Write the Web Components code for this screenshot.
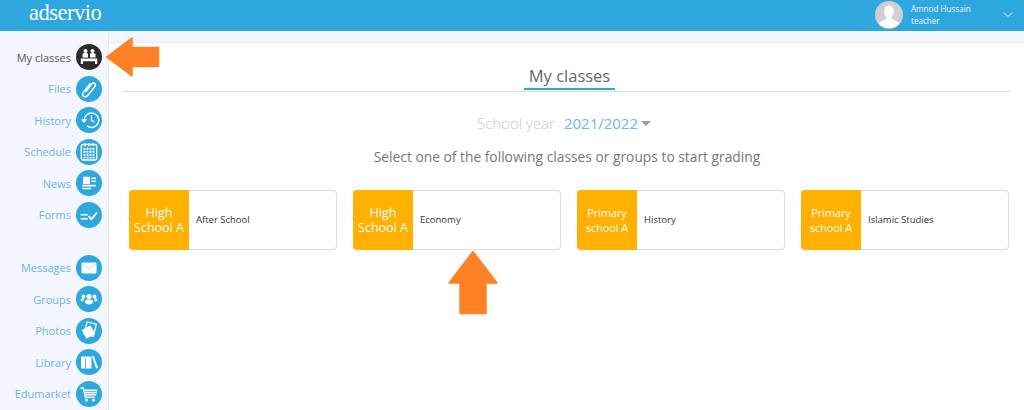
<!DOCTYPE html>
<html lang="en">
<head>
<meta charset="utf-8">
<title>adservio</title>
<style>
    html, body { margin: 0; height: 410px; overflow: hidden; background: #f3f6fe; font-family: "Open Sans", sans-serif; }
    app-shell { display: block; }
</style>
</head>
<body>
<app-shell>
    <app-header slot="header" name="Amnod Hussain" role="teacher"></app-header>
    <side-nav slot="nav">
        <nav-item label="My classes" icon="classes" active></nav-item>
        <nav-item label="Files" icon="files"></nav-item>
        <nav-item label="History" icon="history"></nav-item>
        <nav-item label="Schedule" icon="schedule"></nav-item>
        <nav-item label="News" icon="news"></nav-item>
        <nav-item label="Forms" icon="forms"></nav-item>
        <nav-item slot="second" label="Messages" icon="messages"></nav-item>
        <nav-item slot="second" label="Groups" icon="groups"></nav-item>
        <nav-item slot="second" label="Photos" icon="photos"></nav-item>
        <nav-item slot="second" label="Library" icon="library"></nav-item>
        <nav-item slot="second" label="Edumarket" icon="edumarket"></nav-item>
    </side-nav>
    <class-page slot="main">
        <class-card level="High School A" big>After School</class-card>
        <class-card level="High School A" big>Economy</class-card>
        <class-card level="Primary school A">History</class-card>
        <class-card level="Primary school A">Islamic Studies</class-card>
    </class-page>
    <big-arrow slot="over" dir="left" style="left:105px;top:37px"></big-arrow>
    <big-arrow slot="over" dir="up" style="left:448px;top:250px"></big-arrow>
</app-shell>

<script>
const ICONS = {
    classes: `<circle cx="9.500" cy="7" r="2" fill="#fff"/><circle cx="16.500" cy="7" r="2" fill="#fff"/><path fill="#fff" d="M6.500 13.500v-3c0-1 1.300-1.500 3-1.500 1 0 1.900.2 2.500.6v3.900zM14 13.500V9.600c.6-.4 1.500-.6 2.500-.6 1.700 0 3 .5 3 1.500v3z"/><path fill="#fff" d="M4.800 14.500h16.400v5.500h-2.200v-2.700H7V20H4.800z"/>`,
    files: `<path fill="none" stroke="#fff" stroke-width="1.500" stroke-linecap="round" d="M10 15.500l5.500-7.500c.9-1.200 2.500-1.200 3.300-.5s.9 2-.1 3.200l-7 8.800c-1.300 1.500-3.200 1.500-4.200.7s-1.100-2.500 0-4.100l6.500-8.300"/>`,
    history: `<path fill="none" stroke="#fff" stroke-width="1.500" d="M8.400 13.500a7.200 7.200 0 1 1 2.800 5.400"/><path fill="none" stroke="#fff" stroke-width="1.300" d="M15.500 8.500v4.800l3 1.800"/><path fill="#fff" d="M5 12.300h6.200l-3.100 3.700z"/>`,
    schedule: `<rect x="5.300" y="5.500" width="15.400" height="15.500" rx="2" fill="none" stroke="#fff" stroke-width="1.300"/><path stroke="#fff" stroke-width="1.400" d="M9 4v3M13 4v3M17 4v3"/><path stroke="#fff" stroke-width="1.900" stroke-dasharray="2 1" d="M7.500 9.800h11M7.500 12.800h11M7.500 15.800h11M7.500 18.600h11"/>`,
    news: `<path fill="#fff" d="M7 6.800h7V14H7zM15.300 7.500H20V9h-4.700zM15.300 10.500H20V12h-4.700zM6.300 14.800H20v1.700H6.300zM6.300 17.700H15v1.500H6.300z"/>`,
    forms: `<path fill="#fff" d="M4.700 12h7v1.600h-7zM4.700 16h7v1.600h-7z"/><path fill="none" stroke="#fff" stroke-width="1.900" d="M12.500 14l3 3.200 5.500-6.700"/>`,
    messages: `<rect x="5.500" y="7.500" width="15" height="11" rx="1" fill="#fff"/><path fill="none" stroke="#b7dff3" stroke-width=".9" d="M5.800 8.500l7.200 5.300 7.200-5.300"/>`,
    groups: `<circle cx="13" cy="10.500" r="2.600" fill="#fff"/><circle cx="7.500" cy="10.500" r="1.900" fill="#fff"/><circle cx="18.500" cy="10.500" r="1.900" fill="#fff"/><path fill="#fff" d="M8.800 15.500c0-1.500 1.800-2.100 4.200-2.100s4.200.6 4.200 2.100c0 1.900-2 3-4.200 3s-4.200-1.100-4.200-3zM4.500 13.800c0-.8 1.300-1.300 3-1.300l.8.200c-.7.600-1 1.200-1 2.300l-.1.700c-1.500-.3-2.700-1-2.700-1.900zM21.500 13.800c0-.8-1.300-1.300-3-1.300l-.8.200c.7.600 1 1.200 1 2.300l.1.700c1.500-.3 2.700-1 2.700-1.900z"/>`,
    photos: `<rect x="9.500" y="4.800" width="9.500" height="12.500" transform="rotate(14 14 11)" fill="none" stroke="#fff" stroke-width="1.200"/><rect x="7.500" y="9" width="10" height="10" transform="rotate(-28 12.500 14)" fill="#fff"/>`,
    library: `<path fill="#fff" d="M5 7.500h10.500v12H5z"/><path fill="none" stroke="#2ea6de" stroke-width=".8" d="M9.500 9.500v10"/><path fill="#fff" d="M16 7.500l1.800-.6 4.300 12-2 .6z"/>`,
    edumarket: `<path fill="none" stroke="#fff" stroke-width="1.400" d="M4.500 7h2.800l2 9.200h9.500"/><path fill="#fff" d="M8.200 8.500h13.300l-1.500 6H9.500z"/><path fill="none" stroke="#2ea6de" stroke-width=".7" d="M8.800 10.500h12M9.200 12.500h11"/><circle cx="10.500" cy="19" r="1.500" fill="#fff"/><circle cx="17.500" cy="19" r="1.500" fill="#fff"/>`
};

class AppShell extends HTMLElement {
    constructor() {
        super();
        this.attachShadow({ mode: 'open' });
        this.shadowRoot.innerHTML = `
            <style>
                :host { display: block; position: relative; width: 1024px; height: 410px; overflow: hidden; }
                .body { display: flex; height: 379px; }
            </style>
            <slot name="header"></slot>
            <div class="body">
                <slot name="nav"></slot>
                <slot name="main"></slot>
            </div>
            <slot name="over"></slot>
        `;
    }
}

class AppHeader extends HTMLElement {
    constructor() {
        super();
        this.attachShadow({ mode: 'open' });
    }

    connectedCallback() {
        this.shadowRoot.innerHTML = `
            <style>
                :host { display: flex; align-items: center; height: 31px; background: #2ea6de; color: #fff; padding: 0 10px 0 29px; }
                .logo { font-family: "Liberation Serif", serif; font-size: 22.500px; letter-spacing: -0.5px; line-height: 28px; margin-top: -5px; }
                .user { margin-left: auto; margin-top: -2px; display: flex; align-items: center; }
                .avatar { width: 28px; height: 28px; margin-right: 8px; display: block; }
                .who { font-size: 8.100px; line-height: 12px; width: 91px; color: #eef8fd; }
                .chev { display: block; width: 12px; height: 8px; }
            </style>
            <div class="logo">adservio</div>
            <div class="user">
                <svg class="avatar" viewBox="0 0 28 28">
                    <circle cx="14" cy="14" r="14" fill="#cfcfcf"/>
                    <ellipse cx="14" cy="10.500" rx="5" ry="6.200" fill="#fff"/>
                    <path fill="#fff" d="M11.500 15.500h5v2.300l6.500 3.200c.8.400 1 1.100 1 1.700a14 14 0 0 1-20 0c0-.6.200-1.300 1-1.700l6.500-3.200z"/>
                </svg>
                <div class="who">
                    <div>${this.getAttribute('name')}</div>
                    <div>${this.getAttribute('role')}</div>
                </div>
                <svg class="chev" viewBox="0 0 12 8"><path d="M1.500 1.500l4.500 4 4.500-4" fill="none" stroke="#cfe9f7" stroke-width="1"/></svg>
            </div>
        `;
    }
}

class SideNav extends HTMLElement {
    constructor() {
        super();
        this.attachShadow({ mode: 'open' });
        this.shadowRoot.innerHTML = `
            <style>
                :host { display: block; flex: none; width: 108px; padding-top: 10.500px; border-right: 1px solid #e6e9f0; }
                .group { display: flex; flex-direction: column; }
                .second { margin-top: 21.500px; }
            </style>
            <div class="group"><slot></slot></div>
            <div class="group second"><slot name="second"></slot></div>
        `;
    }
}

class NavItem extends HTMLElement {
    constructor() {
        super();
        this.attachShadow({ mode: 'open' });
    }

    connectedCallback() {
        const active = this.hasAttribute('active');
        this.shadowRoot.innerHTML = `
            <style>
                :host { display: flex; align-items: center; justify-content: flex-end; height: 31.500px; padding-right: 6px; gap: 5px; font-size: 11px; color: ${active ? '#555' : '#6db5e3'}; }
                svg { display: block; width: 26px; height: 26px; flex: none; }
            </style>
            <span>${this.getAttribute('label')}</span>
            <svg viewBox="0 0 26 26">
                <circle cx="13" cy="13" r="13" fill="${active ? '#2b2b2b' : '#2ea6de'}"/>
                ${ICONS[this.getAttribute('icon')]}
            </svg>
        `;
    }
}

class ClassPage extends HTMLElement {
    constructor() {
        super();
        this.attachShadow({ mode: 'open' });
        this.shadowRoot.innerHTML = `
            <style>
                :host { display: block; flex: 1; background: #fff; margin-top: 11px; border-top: 1px solid #e9ebf0; padding: 0 13px 0 14px; color: #666; }
                .title { display: flex; justify-content: center; border-bottom: 1px solid #d9dde0; height: 49px; box-sizing: border-box; padding-top: 21px; }
                .title span { font-size: 16.500px; line-height: 23px; height: 26px; box-sizing: border-box; padding: 0 5px; border-bottom: 2px solid #2ea6de; margin-bottom: -1px; color: #666; margin-left: 5px; }
                .year { display: flex; justify-content: center; align-items: center; margin-top: 20px; font-size: 15px; line-height: 22px; padding-right: 6px; }
                .year span { font-weight: 300; color: #c8c8c8; }
                .year b { font-weight: 400; color: #6db5e3; margin-left: 9px; }
                .caret { width: 0; height: 0; border: 5.500px solid transparent; border-top: 5.500px solid #999; border-bottom: 0; margin-left: 3px; }
                .hint { text-align: center; font-size: 13.800px; line-height: 20px; margin-top: 13px; color: #777; }
                .grid { display: grid; grid-template-columns: repeat(4, 208px); gap: 16px; margin: 23px 0 0 6px; }
            </style>
            <div class="title"><span>My classes</span></div>
            <div class="year"><span>School year</span> <b>2021/2022</b><i class="caret"></i></div>
            <div class="hint">Select one of the following classes or groups to start grading</div>
            <div class="grid"><slot></slot></div>
        `;
    }
}

class ClassCard extends HTMLElement {
    constructor() {
        super();
        this.attachShadow({ mode: 'open' });
    }

    connectedCallback() {
        this.shadowRoot.innerHTML = `
            <style>
                :host { display: flex; height: 60px; box-sizing: border-box; background: #fff; border: 1px solid #dedede; border-radius: 4px; font-size: 9.500px; color: #333; align-items: stretch; }
                .level { flex: none; width: 60px; margin: -1px 0 -1px -1px; background: #ffb000; border-radius: 4px 0 0 4px; color: #fff; display: flex; align-items: center; justify-content: center; text-align: center; font-size: ${this.hasAttribute('big') ? '12.500px' : '10.800px'}; line-height: 15px; padding: 0 2px; box-sizing: border-box; }
                .name { padding: 0 0 2px 7px; display: flex; align-items: center; }
            </style>
            <div class="level">${this.getAttribute('level')}</div>
            <div class="name"><slot></slot></div>
        `;
    }
}

class BigArrow extends HTMLElement {
    constructor() {
        super();
        this.attachShadow({ mode: 'open' });
    }

    connectedCallback() {
        const left = this.getAttribute('dir') === 'left';
        this.shadowRoot.innerHTML = `
            <style>
                :host { position: absolute; display: block; }
                svg { display: block; }
            </style>
            ${left
                ? `<svg width="55" height="40" viewBox="0 0 55 40"><path fill="#ff8125" stroke="#ff8125" stroke-width="1.500" stroke-linejoin="round" d="M1.500 20L27 1v9.500h26.500v19H27v9.500z"/></svg>`
                : `<svg width="50" height="65" viewBox="0 0 50 65"><path fill="#ff8125" stroke="#ff8125" stroke-width="1.500" stroke-linejoin="round" d="M25 1.500L49 33H38V63.500H12V33H1z"/></svg>`}
        `;
    }
}

customElements.define('app-shell', AppShell);
customElements.define('app-header', AppHeader);
customElements.define('side-nav', SideNav);
customElements.define('nav-item', NavItem);
customElements.define('class-page', ClassPage);
customElements.define('class-card', ClassCard);
customElements.define('big-arrow', BigArrow);
</script>
</body>
</html>
